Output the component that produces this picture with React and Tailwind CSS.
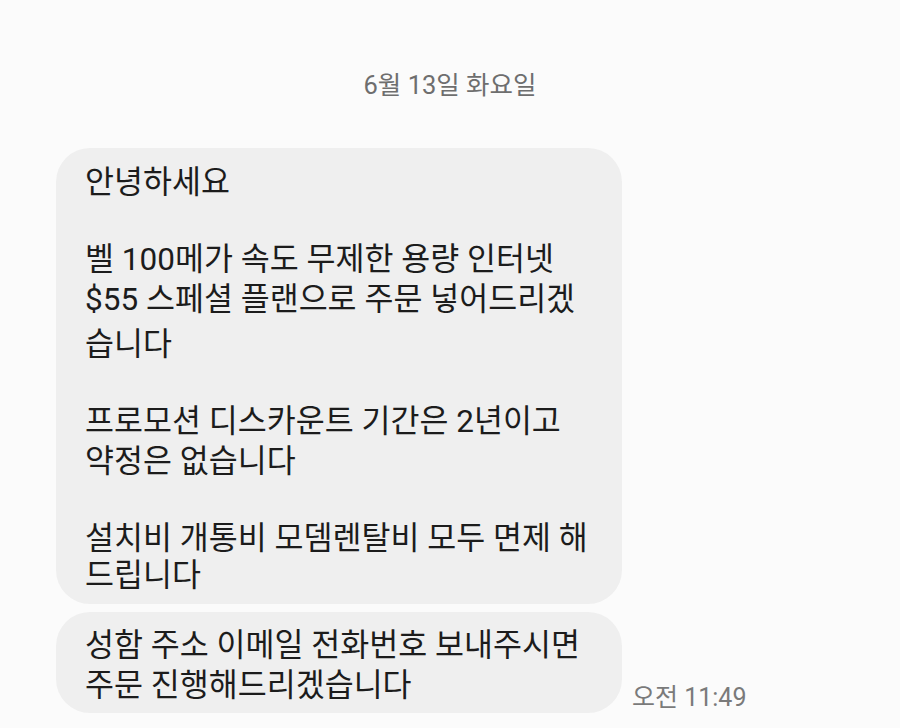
import React from "react";

const FONT = { fontFamily: "Roboto, 'Noto Sans CJK KR', sans-serif" };

// 말풍선 한 줄씩 (원본 줄바꿈 그대로), 두번째 값은 위쪽 여백 보정
const FIRST = [
  [["안녕하세요", 0]],
  [["벨 100메가 속도 무제한 용량 인터넷", 0], ["$55 스페셜 플랜으로 주문 넣어드리겠", 0], ["습니다", 5]],
  [["프로모션 디스카운트 기간은 2년이고", 0], ["약정은 없습니다", 0]],
  [["설치비 개통비 모뎀렌탈비 모두 면제 해", 0], ["드립니다", -3]],
];

const SECOND = ["성함 주소 이메일 전화번호 보내주시면", "주문 진행해드리겠습니다"];

function Bubble({ children, className = "" }) {
  return (
    <div className={`w-[566px] rounded-[34px] bg-[#efefef] pl-[29px] pr-2 text-[31.5px] leading-[40px] text-[#1c1c1c] whitespace-nowrap ${className}`}>
      {children}
    </div>
  );
}

export default function App() {
  return (
    <div className="h-[728px] w-[900px] overflow-hidden bg-[#fbfbfb]" style={FONT}>
      <div className="pt-[70px] text-center text-[25.5px] leading-[30px] text-[#6e6e6e]">6월 13일 화요일</div>

      <div className="mt-[48px] flex flex-col gap-[8px] pl-[56px]">
        <Bubble className="pt-[15px] pb-[8px]">
          {FIRST.map((para, i) => (
            <div key={i} className={i > 0 ? "mt-[37px]" : ""}>
              {para.map(([line, off]) => (
                <div key={line} className={off === 5 ? "mt-[5px]" : off === -3 ? "-mt-[3px]" : ""}>
                  {line}
                </div>
              ))}
            </div>
          ))}
        </Bubble>

        <div className="flex items-end gap-[10px]">
          <Bubble className="pt-[14px] pb-[7px]">
            {SECOND.map((line) => (
              <div key={line}>{line}</div>
            ))}
          </Bubble>
          <div className="pb-0 text-[25px] leading-[30px] text-[#7a7a7a]">오전 11:49</div>
        </div>
      </div>
    </div>
  );
}
